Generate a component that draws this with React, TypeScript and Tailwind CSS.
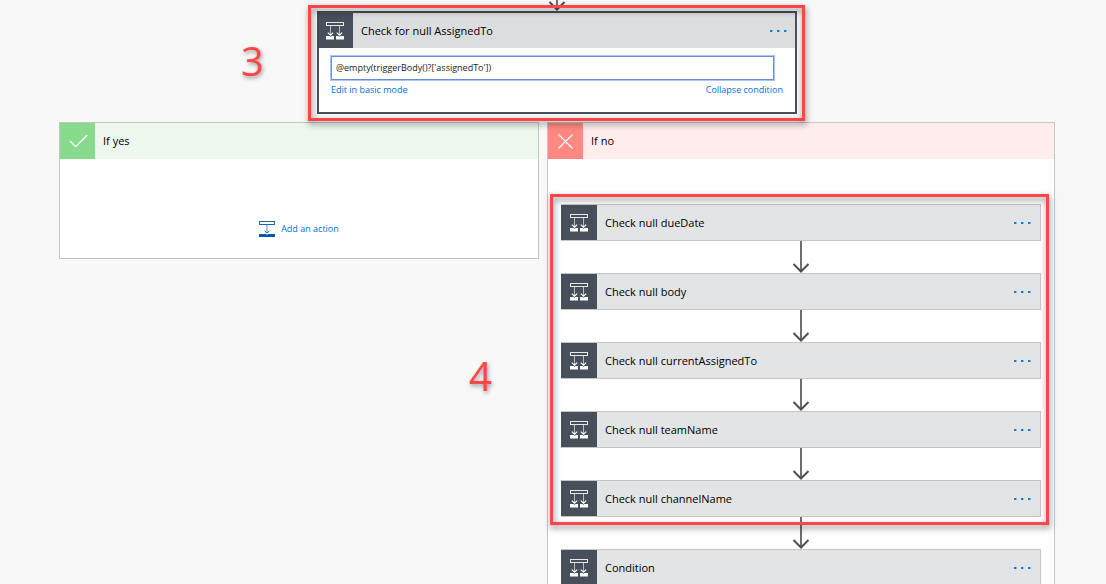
import type { ReactNode } from 'react';

const nullChecks = [
  'Check null dueDate',
  'Check null body',
  'Check null currentAssignedTo',
  'Check null teamName',
  'Check null channelName',
];

function ConditionIcon() {
  return (
    <svg viewBox="0 0 36 36" className="h-9 w-9 shrink-0" fill="none" aria-hidden="true">
      <rect x="9.5" y="9.5" width="17" height="3" stroke="#e6e8ea" />
      <path d="M13.5 13v9M22.5 13v9" stroke="#b9bdc3" />
      <path d="M10.8 19.6l2.7 2.6 2.7-2.6M19.8 19.6l2.7 2.6 2.7-2.6" stroke="#fff" strokeWidth="1.1" />
      <path d="M9 23h3.3l1.2.7 1.2-.7H17v3.6H9zM19 23h2.3l1.2.7 1.2-.7H27v3.6h-8z" fill="#fff" />
    </svg>
  );
}

function MoreButton({ label }: { label: string }) {
  return (
    <button type="button" aria-label={`More options for ${label}`} className="flex h-6 w-5 items-center justify-center">
      <svg viewBox="0 0 18 2" className="h-[2px] w-[18px]" fill="#0f7bdc" aria-hidden="true">
        <rect x="1" width="2.4" height="2" />
        <rect x="8" width="2.4" height="2" />
        <rect x="15" width="2.4" height="2" />
      </svg>
    </button>
  );
}

function Arrow() {
  return (
    <svg viewBox="0 0 18 32" className="mx-auto block h-8 w-[18px]" fill="none" aria-hidden="true">
      <path d="M9 0v30" stroke="#6e6e6e" strokeWidth="2" />
      <path d="M1.5 23L9 30.5l7.5-7.5" stroke="#4f4f4f" strokeWidth="2" />
    </svg>
  );
}

function ActionCard({ title }: { title: string }) {
  return (
    <div className="flex h-[37px] items-center border-y border-r border-[#c5c5c5] bg-[#e3e4e6] pr-2">
      <div className="h-[35px] w-9 shrink-0 overflow-hidden bg-[#474f5b]">
        <ConditionIcon />
      </div>
      <h3 className="flex-1 pl-2">{title}</h3>
      <MoreButton label={title} />
    </div>
  );
}

// red outline drawn over a group of steps
function Highlight({ className }: { className: string }) {
  return (
    <div
      className={`pointer-events-none absolute z-10 border-3 border-[#ff4545] drop-shadow-[1px_3px_3px_rgba(0,0,0,0.5)] ${className}`}
    />
  );
}

function StepNumber({ className, children }: { className: string; children: ReactNode }) {
  return (
    <span
      className={`absolute text-[40px] leading-10 font-medium text-[#ff4545] [text-shadow:1px_2px_4px_rgba(0,0,0,0.4)] ${className}`}
    >
      {children}
    </span>
  );
}

export default function App() {
  return (
    <div className="relative h-screen overflow-hidden bg-[#f8f8f8] pr-[51px] pl-[59px] font-['Open_Sans','Noto_Sans',sans-serif] text-[11px] leading-4 text-black">
      <div className="flex h-[11px] items-end justify-center overflow-hidden">
        <Arrow />
      </div>

      <section className="relative mx-auto max-w-[480px] border-2 border-[#474f5b] bg-white">
        <Highlight className="-top-2 -right-[10px] -bottom-[9px] -left-[11px]" />
        <div className="flex h-[35px] items-center bg-[#dcdddf] pr-[7px]">
          <div className="h-[35px] w-[34px] shrink-0 overflow-hidden bg-[#474f5b]">
            <div className="-ml-[2px] w-9">
              <ConditionIcon />
            </div>
          </div>
          <h2 className="flex-1 pl-2">Check for null AssignedTo</h2>
          <MoreButton label="Check for null AssignedTo" />
        </div>
        <div className="pt-2 pr-3 pb-[14px] pl-3 text-[9px]">
          <div className="pr-[9px]">
            <input
              type="text"
              aria-label="Condition expression"
              defaultValue="@empty(triggerBody()?['assignedTo'])"
              className="block h-6 w-full border border-[#6a8fd0] bg-white px-1 pb-[2px] text-[#222] ring-1 ring-[#a9c8f8] outline-none"
            />
          </div>
          <div className="flex justify-between pt-[2px] text-[#0072d6]">
            <a href="#basic">Edit in basic mode</a>
            <a href="#collapse">Collapse condition</a>
          </div>
        </div>
      </section>

      <div className="grid grid-cols-[480fr_508fr] items-start gap-2 pt-2">
        <section className="border border-[#c5c5c5] bg-white">
          <div className="flex h-9 items-center bg-[#edf7ee]">
            <div className="h-9 w-[35px] bg-[#88da8d]">
              <svg viewBox="0 0 35 36" className="h-9 w-[35px]" fill="none" stroke="#fff" strokeWidth="1.3" aria-hidden="true">
                <path d="M10 18l5.7 5.7L27 12.2" />
              </svg>
            </div>
            <h2 className="pl-2">If yes</h2>
          </div>
          <div className="flex justify-center pt-[62px] pb-[21px]">
            <button type="button" className="flex items-center gap-[6px] text-[9px] text-[#0072d6]">
              <svg viewBox="0 0 16 16" className="h-4 w-4" fill="none" stroke="#1565b8" aria-hidden="true">
                <rect x="0.5" y="0.5" width="15" height="3" />
                <path d="M8 4v8" stroke="#5b93cd" />
                <path d="M5.6 9.8L8 12.2l2.4-2.4" />
                <path d="M0 13h6.8l1.2.7 1.2-.7H16v3H0z" fill="#0058ad" stroke="none" />
              </svg>
              Add an action
            </button>
          </div>
        </section>

        <section className="border border-[#c5c5c5] bg-white">
          <div className="flex h-9 items-center bg-[#ffecec]">
            <div className="h-9 w-[35px] bg-[#ff8982]">
              <svg viewBox="0 0 35 36" className="h-9 w-[35px]" fill="none" stroke="#fff" strokeWidth="1.1" aria-hidden="true">
                <path d="M10.5 11.5l14 14M24.5 11.5l-14 14" />
              </svg>
            </div>
            <h2 className="pl-2">If no</h2>
          </div>
          <div className="px-[13px] pt-[45px] pb-8">
            <div className="relative">
              <Highlight className="-top-[10px] -right-2 -bottom-2 -left-[11px]" />
              {nullChecks.map((title, i) => (
                <div key={title}>
                  {i > 0 && <Arrow />}
                  <ActionCard title={title} />
                </div>
              ))}
            </div>
            <Arrow />
            <ActionCard title="Condition" />
          </div>
        </section>
      </div>

      <StepNumber className="top-[41px] left-[241px]">3</StepNumber>
      <StepNumber className="top-[356px] left-[469px]">4</StepNumber>
    </div>
  );
}
